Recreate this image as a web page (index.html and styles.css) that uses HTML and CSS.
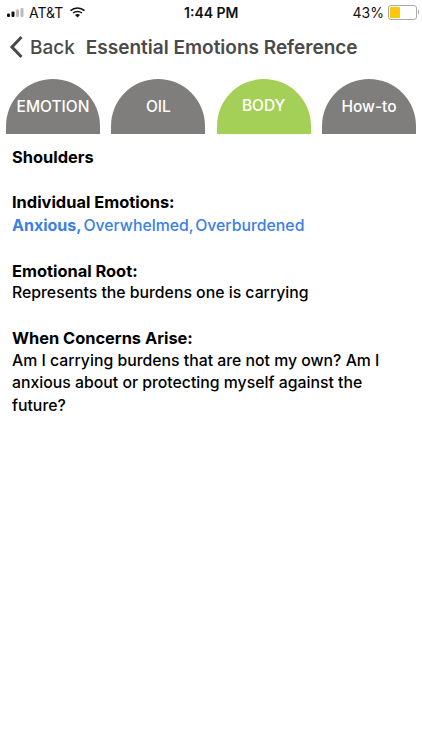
FILE: index.html
```html
<!DOCTYPE html>
<html lang="en">
<head>
  <meta charset="UTF-8" />
  <meta name="viewport" content="width=device-width, initial-scale=1.0"/>
  <title>Essential Emotions Reference</title>
  <link rel="stylesheet" href="styles.css">
</head>
<body>

  <!-- Status bar -->
  <div class="status-bar">
    <div class="status-left">
      <svg class="signal" width="19" height="9" viewBox="0 0 19 9">
        <rect x="0" y="5.5" width="3" height="3.5" rx="1" fill="#111"/>
        <rect x="4.5" y="3.5" width="3" height="5.5" rx="1" fill="#111"/>
        <rect x="9" y="1.5" width="3" height="7.5" rx="1" fill="#bbb"/>
        <rect x="13.5" y="0" width="3" height="9" rx="1" fill="#bbb"/>
      </svg>
      <span>AT&amp;T</span>
      <svg class="wifi" width="15" height="11" viewBox="0 0 15 11">
        <path d="M0.5 3.6 C4.5 0 10.5 0 14.5 3.6" fill="none" stroke="#111" stroke-width="1.5"/>
        <path d="M3 6 C5.5 3.9 9.5 3.9 12 6" fill="none" stroke="#111" stroke-width="1.5"/>
        <path d="M5 7.9 C6.5 6.8 8.5 6.8 10 7.9 L7.5 10.6 Z" fill="#111"/>
      </svg>
    </div>
    <div class="status-time">1:44 PM</div>
    <div class="status-right">
      <span>43%</span>
      <div class="battery"><div class="battery-level"></div></div>
      <div class="battery-tip"></div>
    </div>
  </div>

  <!-- Nav -->
  <div class="nav">
    <div class="back">
      <svg width="15" height="24" viewBox="0 0 15 24">
        <path d="M12.5 2 L3 12 L12.5 22" fill="none" stroke="#4a4a4a" stroke-width="3"/>
      </svg>
      <span>Back</span>
    </div>
    <div class="nav-title">Essential Emotions Reference</div>
  </div>

  <!-- Tabs -->
  <div class="tabs">
    <div class="tab">EMOTION</div>
    <div class="tab">OIL</div>
    <div class="tab active">BODY</div>
    <div class="tab">How-to</div>
  </div>

  <!-- Content -->
  <div class="content">
    <div class="block">
      <div class="label">Shoulders</div>
    </div>
    <div class="block">
      <div class="label">Individual Emotions:</div>
      <div class="links"><b>Anxious,</b> Overwhelmed, Overburdened</div>
    </div>
    <div class="block">
      <div class="label">Emotional Root:</div>
      <div>Represents the burdens one is carrying</div>
    </div>
    <div class="block">
      <div class="label">When Concerns Arise:</div>
      <div>Am I carrying burdens that are not my own? Am I anxious about or protecting myself against the future?</div>
    </div>
  </div>

</body>
</html>
```

FILE: styles.css
```css
body {
  background: white;
  font-family: Inter, "Liberation Sans", sans-serif;
  margin: 0;
  color: black;
}

.status-bar {
  height: 24px;
  display: flex;
  align-items: center;
  justify-content: space-between;
  padding: 0 3px 0 7px;
  font-size: 14px;
  color: #111;
  position: relative;
}

.status-left, .status-right {
  display: flex;
  align-items: center;
}

.status-left span {
  margin: 0 7px 0 3px;
}

.status-time {
  position: absolute;
  left: 184px;
  font-weight: 600;
}

.battery {
  width: 25px;
  height: 11px;
  margin-left: 4px;
  padding: 1px;
  border: 1px solid #aaa;
  border-radius: 3px;
}

.battery-level {
  width: 10px;
  height: 100%;
  background: #fdc70c;
  border-radius: 1px;
}

.battery-tip {
  width: 1px;
  height: 4px;
  margin-left: 1px;
  background: #aaa;
}

.nav {
  display: flex;
  align-items: center;
  height: 46px;
  padding-left: 9px;
  color: #4a4a4a;
}

.back {
  display: flex;
  align-items: center;
  font-size: 19px;
  font-weight: 500;
}

.back span {
  margin-left: 6px;
}

.nav-title {
  margin-left: 11px;
  font-size: 19px;
  font-weight: 600;
}

.tabs {
  display: flex;
  justify-content: space-between;
  padding: 9px 6px 0;
}

.tab {
  width: 94px;
  height: 55px;
  box-sizing: border-box;
  padding-top: 18px;
  background: #7f7e7c;
  border-radius: 47px 47px 0 0;
  color: white;
  font-size: 15.5px;
  font-weight: 500;
  text-align: center;
}

.tab.active {
  background: #a5d057;
  padding-top: 17px;
}

.content {
  padding: 12px 12px 0;
  font-size: 15.8px;
  font-weight: 500;
  line-height: 22.5px;
}

.block {
  margin-bottom: 22.5px;
}

.label {
  font-size: 16.4px;
  font-weight: 700;
}

.links {
  color: #3b80e6;
  word-spacing: -2.4px;
}

.links b {
  font-size: 16px;
  font-weight: 700;
}
```
